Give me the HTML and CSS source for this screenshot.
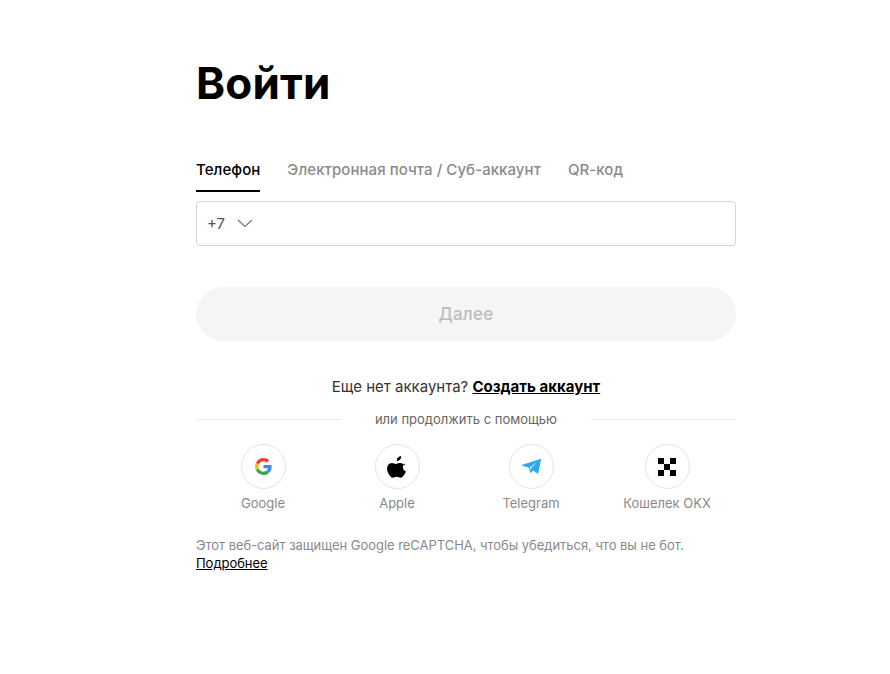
FILE: index.html
```html
<!DOCTYPE html>
<html>
<head>
<meta name="viewport" content="width=device-width, initial-scale=1">
<link rel="stylesheet" href="styles.css">
</head>
<body>

<div class="login">
  <h1 class="title">Войти</h1>

  <div class="tabs">
    <a class="tab active">Телефон</a>
    <a class="tab">Электронная почта / Суб-аккаунт</a>
    <a class="tab">QR-код</a>
  </div>

  <div class="phone">
    <span class="code">+7</span>
    <svg class="chevron" width="16" height="9" viewBox="0 0 16 9"><path d="M1 1l7 6.5L15 1" fill="none" stroke="#777" stroke-width="1.2"/></svg>
  </div>

  <button class="next">Далее</button>

  <p class="signup">Еще нет аккаунта? <a class="signup-link">Создать аккаунт</a></p>

  <div class="divider"><span>или продолжить с помощью</span></div>

  <div class="socials">
    <div class="social">
      <div class="circle">
        <svg width="17" height="17" viewBox="0 0 48 48">
          <path fill="#EA4335" d="M24 9.500c3.500 0 6.700 1.200 9.200 3.600l6.900-6.900C35.900 2.400 30.500 0 24 0 14.600 0 6.500 5.400 2.600 13.200l8 6.200C12.500 13.700 17.800 9.500 24 9.500z"/>
          <path fill="#4285F4" d="M47 24.500c0-1.600-.1-3.100-.4-4.500H24v9h12.900c-.6 3-2.200 5.500-4.700 7.200l7.700 6C44.400 38 47 31.800 47 24.500z"/>
          <path fill="#FBBC05" d="M10.600 28.600c-.5-1.400-.8-3-.8-4.600s.3-3.200.8-4.600l-8-6.200C.9 16.500 0 20.100 0 24s.9 7.500 2.600 10.800l8-6.200z"/>
          <path fill="#34A853" d="M24 48c6.500 0 11.900-2.100 15.900-5.800l-7.700-6c-2.100 1.400-4.900 2.300-8.200 2.300-6.200 0-11.500-4.200-13.400-9.900l-8 6.200C6.500 42.600 14.600 48 24 48z"/>
        </svg>
      </div>
      <span class="social-name">Google</span>
    </div>
    <div class="social">
      <div class="circle">
        <svg width="20" height="22" viewBox="0 0 20 22"><path d="M14.200 0c.1 1.300-.4 2.500-1.100 3.400-.8.900-2 1.600-3.200 1.500-.1-1.200.4-2.500 1.100-3.300C11.800.7 13.100.1 14.200 0zM18.100 7.500c-1.400.9-2.200 2.200-2.200 3.800 0 1.900 1.100 3.300 3 4.100-.4 1.200-.9 2.300-1.700 3.400-1 1.500-2.100 2.900-3.700 2.900-1.500 0-2-.9-3.800-.9-1.700 0-2.400.9-3.800.9-1.500.1-2.700-1.500-3.700-3C.1 15.800-.7 11.900 1 9.200c.9-1.400 2.400-2.300 4-2.300 1.500 0 2.900 1 3.800 1 .9 0 2.500-1.200 4.300-1 1.900.1 3.700.7 5 2.600z"/></svg>
      </div>
      <span class="social-name">Apple</span>
    </div>
    <div class="social">
      <div class="circle">
        <svg width="19" height="15" viewBox="0 0 19 15"><path fill="#2AABEE" d="M18.400.1c.4-.2.700.1.600.5L16.300 14c-.1.500-.6.700-1 .4l-4.100-3-2.300 2.300c-.4.300-.9.200-1-.3L7 8.700.4 6.700c-.5-.1-.5-.7 0-.9zM7.800 8.600l.5 3.300.5-2.600 6-6z"/></svg>
      </div>
      <span class="social-name">Telegram</span>
    </div>
    <div class="social">
      <div class="circle">
        <div class="okx">
          <i></i><b></b><i></i>
          <b></b><i></i><b></b>
          <i></i><b></b><i></i>
        </div>
      </div>
      <span class="social-name">Кошелек OKX</span>
    </div>
  </div>

  <p class="captcha">Этот веб-сайт защищен Google reCAPTCHA, чтобы убедиться, что вы не бот.<br><a class="more">Подробнее</a></p>
</div>

</body>
</html>
```

FILE: styles.css
```css
* {
  box-sizing: border-box;
}

body {
  margin: 0;
  background: #fff;
  color: #000;
  font-family: Inter, "Liberation Sans", sans-serif;
}

.login {
  width: 540px;
  margin-left: 196px;
  padding-top: 54px;
}

.title {
  margin: 0;
  font-size: 44px;
  line-height: 58px;
  font-weight: 700;
  letter-spacing: .2px;
}

.tabs {
  display: flex;
  gap: 27px;
  margin-top: 34px;
}

.tab {
  height: 46px;
  padding-top: 14px;
  font-size: 15px;
  line-height: 20px;
  font-weight: 500;
  letter-spacing: .06px;
  color: #8a8a8a;
}

.tab.active {
  color: #000;
  border-bottom: 2px solid #000;
}

.phone {
  display: flex;
  align-items: center;
  height: 45px;
  margin-top: 9px;
  padding-left: 10px;
  border: 1px solid #d4d4d4;
  border-radius: 4px;
}

.code {
  font-size: 15px;
  color: #555;
}

.chevron {
  margin-left: 12px;
}

.next {
  display: block;
  width: 100%;
  height: 54px;
  margin-top: 41px;
  border: 0;
  border-radius: 27px;
  background: #f5f5f5;
  color: #bdbdbd;
  font-family: inherit;
  font-size: 17px;
  font-weight: 500;
  letter-spacing: .2px;
}

.signup {
  margin: 36px 0 0;
  text-align: center;
  font-size: 15px;
  line-height: 20px;
  color: #333;
}

.signup-link {
  color: #000;
  font-weight: 700;
  text-decoration: underline;
}

.divider {
  display: flex;
  align-items: center;
  margin-top: 13px;
  gap: 34px;
  font-size: 13px;
  line-height: 18px;
  color: #666;
}

.divider::before,
.divider::after {
  content: "";
  flex: 1;
  height: 1px;
  background: #ebebeb;
}

.socials {
  display: grid;
  grid-template-columns: repeat(3, 134px) 138px;
  margin-top: 16px;
}

.social {
  display: flex;
  flex-direction: column;
  align-items: center;
  gap: 5px;
}

.circle {
  display: flex;
  align-items: center;
  justify-content: center;
  width: 45px;
  height: 45px;
  border: 1px solid #e4e4e4;
  border-radius: 50%;
}

.social-name {
  font-size: 13px;
  line-height: 18px;
  color: #8a8a8a;
}

.okx {
  display: grid;
  grid-template-columns: repeat(3, 6px);
  grid-auto-rows: 6px;
}

.okx i {
  background: #000;
}

.captcha {
  margin: 24px 0 0;
  font-size: 13px;
  line-height: 18px;
  letter-spacing: -.04px;
  color: #8a8a8a;
}

.more {
  color: #000;
  text-decoration: underline;
}
```
